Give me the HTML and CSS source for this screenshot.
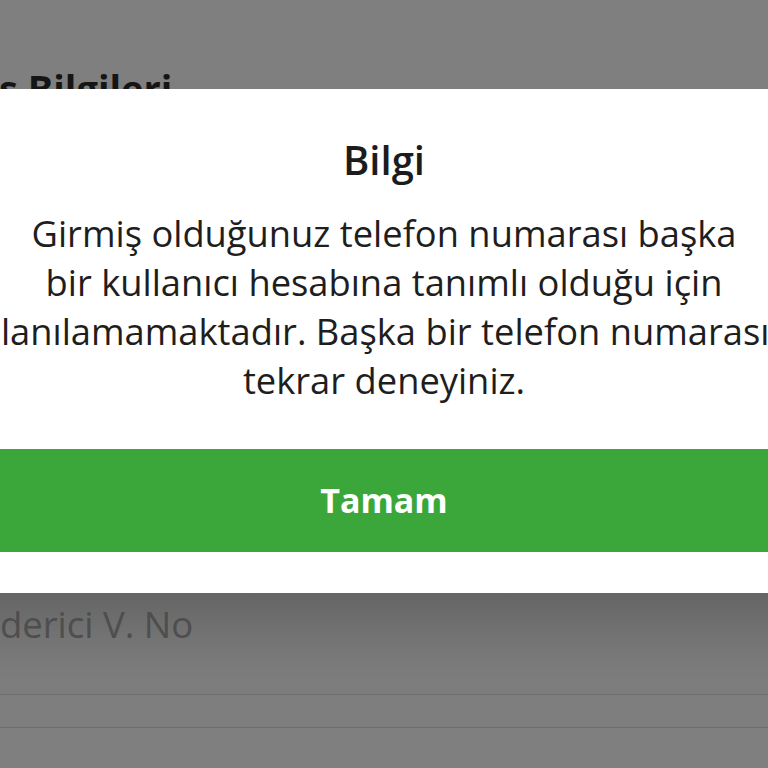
FILE: index.html
```html
<!DOCTYPE html>
<html lang="tr">
<head>
<meta charset="utf-8">
<title>Bilgi</title>
<link rel="stylesheet" href="styles.css">
</head>
<body>
<div class="page">
  <div class="bg-top">
    <h2 class="bg-heading">Adres Bilgileri</h2>
  </div>
  <div class="bg-field">
    <div class="bg-label">Gönderici V. No</div>
  </div>
  <div class="bg-row"></div>
  <div class="bg-rest"></div>
</div>

<div class="dialog" role="dialog">
  <h1 class="dialog-title">Bilgi</h1>
  <p class="dialog-text">
    <span class="line">Girmiş olduğunuz telefon numarası başka</span>
    <span class="line">bir kullanıcı hesabına tanımlı olduğu için</span>
    <span class="line">kullanılamamaktadır. Başka bir telefon numarası ile</span>
    <span class="line">tekrar deneyiniz.</span>
  </p>
  <button class="dialog-btn" type="button">Tamam</button>
</div>
</body>
</html>
```

FILE: styles.css
```css
html, body {
  margin: 0;
  padding: 0;
}
body {
  width: 768px;
  height: 768px;
  overflow: hidden;
  position: relative;
  background: #7f7f7f;
  font-family: "Open Sans", "Noto Sans", sans-serif;
}

/* dimmed page behind the dialog */
.page {
  display: flex;
  flex-direction: column;
}
.bg-top {
  height: 593px;
  padding-top: 63px;
  box-sizing: border-box;
}
.bg-heading {
  margin: 0 0 0 -91px;
  font-size: 38px;
  line-height: 50px;
  font-weight: 700;
  color: #151515;
  white-space: nowrap;
}
.bg-field {
  height: 102px;
  box-sizing: border-box;
  padding-top: 10px;
  background: linear-gradient(#656565 0px, #6b6b6b 20px, #787878 60px, #7d7d7d 90px);
  border-bottom: 1px solid #6d6d6d;
}
.bg-label {
  margin-left: -71px;
  font-size: 36.5px;
  line-height: 42px;
  color: #4e4e4e;
  white-space: nowrap;
}
.bg-row {
  height: 32px;
  border-bottom: 1px solid #6d6d6d;
  background: #7e7e7e;
}
.bg-rest {
  flex: 1;
  background: #7f7f7f;
}

/* dialog overlay */
.dialog {
  position: absolute;
  top: 88.5px;
  left: -150px;
  right: -150px;
  background: #ffffff;
  padding: 46px 0 41.5px;
  text-align: center;
  display: flex;
  flex-direction: column;
  align-items: stretch;
}
.dialog-title {
  margin: 0;
  font-size: 40px;
  line-height: 50px;
  font-weight: 600;
  color: #1c1c1c;
}
.dialog-text {
  margin: 24px 0 44px;
  font-size: 36.3px;
  line-height: 49px;
  color: #1e1e1e;
}
.line {
  display: block;
  white-space: nowrap;
}
.dialog-btn {
  display: block;
  height: 103px;
  border: 0;
  margin: 0;
  padding: 0;
  background: #3ba73a;
  color: #ffffff;
  font-family: "Open Sans", "Noto Sans", sans-serif;
  font-size: 34px;
  font-weight: 700;
  line-height: 103px;
}
```
